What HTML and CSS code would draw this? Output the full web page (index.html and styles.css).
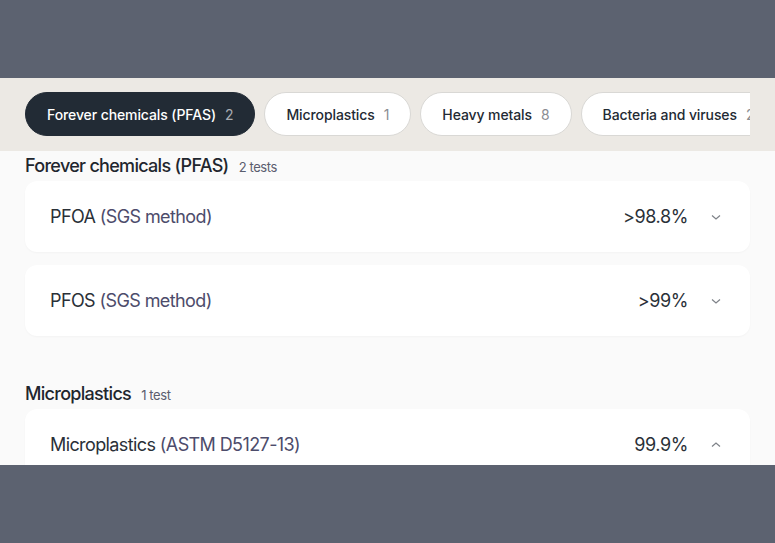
FILE: index.html
```html
<!DOCTYPE html>
<html lang="en">
<head>
    <meta charset="UTF-8">
    <meta name="viewport" content="width=device-width, initial-scale=1.0">
    <link rel="stylesheet" href="styles.css">
</head>
<body>
    <div class="sheet">
        <!-- category filter chips -->
        <div class="filters">
            <div class="chip-row">
                <a class="chip active">Forever chemicals (PFAS) <span class="count">2</span></a>
                <a class="chip">Microplastics <span class="count">1</span></a>
                <a class="chip">Heavy metals <span class="count">8</span></a>
                <a class="chip">Bacteria and viruses <span class="count">2</span></a>
            </div>
        </div>

        <div class="results">
            <!-- PFAS -->
            <div class="group">
                <h2 class="group-title">Forever chemicals (PFAS) <span class="group-count">2 tests</span></h2>
                <div class="test-card">
                    <div class="test-name">PFOA <span class="method">(SGS method)</span></div>
                    <div class="test-value">&gt;98.8%</div>
                    <svg class="chev" viewBox="0 0 12 8"><path d="M2 2.5l4 3.5 4-3.5"/></svg>
                </div>
                <div class="test-card">
                    <div class="test-name">PFOS <span class="method">(SGS method)</span></div>
                    <div class="test-value">&gt;99%</div>
                    <svg class="chev" viewBox="0 0 12 8"><path d="M2 2.5l4 3.5 4-3.5"/></svg>
                </div>
            </div>

            <!-- Microplastics -->
            <div class="group">
                <h2 class="group-title">Microplastics <span class="group-count">1 test</span></h2>
                <div class="test-card">
                    <div class="test-name">Microplastics <span class="method">(ASTM D5127-13)</span></div>
                    <div class="test-value">99.9%</div>
                    <svg class="chev" viewBox="0 0 12 8"><path d="M2 5.5l4-3.5 4 3.5"/></svg>
                </div>
            </div>
        </div>
    </div>
</body>
</html>
```

FILE: styles.css
```css
body{
    margin:0;
    background:#5c6270;
    font-family:Inter, "Liberation Sans", sans-serif;
    color:#232a33;
}
.sheet{
    margin-top:78px;
    height:387px;
    overflow:hidden;
    background:#fafafa;
}

/* filter chips */
.filters{
    background:#ece9e4;
    padding:14px 25px 15px;
}
.chip-row{
    display:flex;
    gap:9px;
    width:725px;
    overflow:hidden;
}
.chip{
    flex:none;
    display:flex;
    align-items:center;
    gap:9px;
    height:42px;
    padding:0 21px;
    border:1px solid #d9d8d5;
    border-radius:22px;
    background:#fff;
    font-size:14px;
    font-weight:500;
    letter-spacing:-0.1px;
    color:#232a33;
}
.chip .count{
    color:#8a8d92;
    font-weight:400;
}
.chip.active{
    background:#222b35;
    border-color:#222b35;
    color:#fff;
}
.chip.active .count{
    color:#a9adb3;
}

/* result list */
.results{
    padding:3px 25px 0;
}
.group{
    display:flex;
    flex-direction:column;
    gap:13px;
}
.group + .group{
    margin-top:46px;
}
.group-title{
    margin:0 0 -11px;
    font-size:18px;
    line-height:24px;
    font-weight:500;
    letter-spacing:-0.7px;
    color:#1f262e;
}
.group-count{
    margin-left:6px;
    font-size:13px;
    font-weight:400;
    letter-spacing:-0.4px;
    color:#5a5d6e;
}
.test-card{
    display:flex;
    align-items:center;
    height:71px;
    padding:0 28px 0 25px;
    background:#fff;
    border-radius:12px;
    box-shadow:0 1px 2px rgba(0,0,0,0.03);
}
.test-name{
    flex:1;
    font-size:18px;
    letter-spacing:-0.6px;
    color:#2a3038;
}
.method{
    color:#4d4c6b;
}
.test-value{
    font-size:18px;
    letter-spacing:-0.4px;
    color:#2a3038;
}
.chev{
    width:12px;
    height:8px;
    margin-left:22px;
    fill:none;
    stroke:#7e8288;
    stroke-width:1.2;
}
```
